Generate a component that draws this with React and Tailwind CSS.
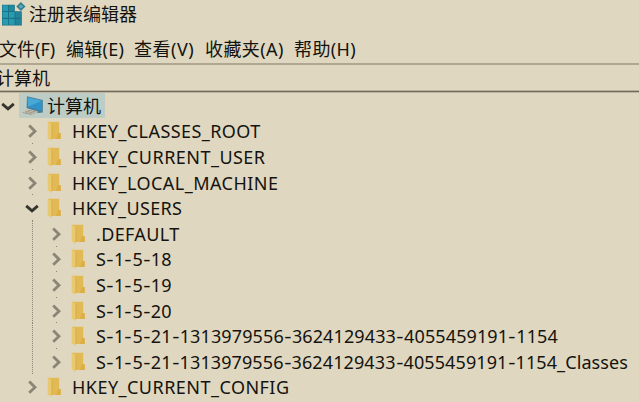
const menus = [
  { label: '文件(F)', cls: '-ml-px w-[67px]' },
  { label: '编辑(E)', cls: 'w-[68px] tracking-[0.25px]' },
  { label: '查看(V)', cls: 'w-[71px] tracking-[0.5px]' },
  { label: '收藏夹(A)', cls: 'w-[89px] tracking-[0.4px]' },
  { label: '帮助(H)', cls: 'w-[80px] tracking-[0.4px]' },
];

const rows = [
  { label: 'HKEY_CLASSES_ROOT', depth: 1, cls: 'tracking-[0.43px]' },
  { label: 'HKEY_CURRENT_USER', depth: 1, cls: 'tracking-[0.47px]' },
  { label: 'HKEY_LOCAL_MACHINE', depth: 1, cls: 'tracking-[0.46px]' },
  { label: 'HKEY_USERS', depth: 1, open: true, cls: 'tracking-[0.35px]' },
  { label: '.DEFAULT', depth: 2, cls: 'tracking-[0.35px]' },
  { label: 'S-1-5-18', depth: 2, cls: 'tracking-[0.1px]' },
  { label: 'S-1-5-19', depth: 2, cls: 'tracking-[0.1px]' },
  { label: 'S-1-5-20', depth: 2, cls: 'tracking-[0.1px]' },
  { label: 'S-1-5-21-1313979556-3624129433-4055459191-1154', depth: 2, cls: 'tracking-[0.12px]' },
  { label: 'S-1-5-21-1313979556-3624129433-4055459191-1154_Classes', depth: 2, cls: 'tracking-[0.1px]' },
  { label: 'HKEY_CURRENT_CONFIG', depth: 1, cls: 'tracking-[0.47px]' },
];

function RegistryIcon() {
  return (
    <svg className="h-[26px] w-[26px] shrink-0" viewBox="0 0 26 26">
      <path d="M2 3.7h12.8v6.6h7V24.6H2z" fill="#1b7285" />
      <path d="M2.6 4.3h5.4v5.6H2.6zM2.6 11h5.4v5.8H2.6zM9 11h5.6v5.8H9zM2.6 17.9h5.4v5.8H2.6zM9 17.9h5.6v5.8H9z" fill="#279bb1" />
      <path d="M9 4.3h5v5.6H9z" fill="#1f899e" />
      <path d="M15.6 11h5.4v5.8h-5.4zM15.6 17.9h5.4v5.8h-5.4z" fill="#218499" />
      <path d="M20.9 1l4.6 4.5-4.6 4.5-4.6-4.5z" fill="#367f90" />
      <path d="M20.9 3.4l2.2 2.1-2.2 2.1-2.2-2.1z" fill="#5eadba" />
    </svg>
  );
}

function ComputerIcon() {
  return (
    <svg className="h-[22px] w-6 shrink-0" viewBox="0 0 24 22">
      <path d="M8 1.2L23.8 5v12.4L19.4 18 7.6 13z" fill="#4b7d95" />
      <path d="M8.8 2.3L22.8 5.7v10.4L8.9 11.8z" fill="#2d93c8" />
      <path d="M8.8 2.3L22.8 5.7 8.9 11.8z" fill="#4aa8d4" />
      <path d="M1 17l8.6-3.3 9.6 2.8-6 4.2z" fill="#c9c7b8" />
      <path d="M3.5 17.4l9.8 2.2M6 16.2l10 2.2M8.6 15l9.5 2.2M6 18.6l7-4M9.5 19.4l7-4" stroke="#8f8c80" strokeWidth=".6" fill="none" />
    </svg>
  );
}

function FolderIcon() {
  return (
    <svg className="h-5 w-4 shrink-0" viewBox="0 0 16 20">
      <path d="M1 .8h11.2v11.4l1.5 1V18H4L1 16.5z" fill="#e2ba55" />
      <path d="M11 12h2.7v6H9z" fill="#dcae45" />
      <path d="M.7.8l4 2.2v17L.7 17.4z" fill="#e9c970" />
      <path d="M4.9 3.2v14.8" stroke="#d4a54b" strokeWidth=".7" />
    </svg>
  );
}

function Chevron({ open }) {
  return (
    <svg className="h-4 w-4 shrink-0" viewBox="0 0 16 16" fill="none" strokeWidth="2.8">
      {open ? <path d="M2.2 5.9L8 10.9l5.8-5" stroke="#35332e" /> : <path d="M5.2 2.4L11 8.2l-5.8 5.5" stroke="#8b8577" />}
    </svg>
  );
}

function Label({ text, cls }) {
  return (
    <span className={`ml-[9px] whitespace-pre leading-6 ${cls}`}>
      {text.split(/(-)/).map((part, i) =>
        part === '-' ? (
          <span key={i} className="inline-block w-[8px] scale-x-125 text-center tracking-normal">-</span>
        ) : (
          part
        )
      )}
    </span>
  );
}

function Row({ row, index }) {
  return (
    <div className="flex h-[25.6px] items-center">
      {row.depth === 2 && (
        <div className="flex h-full w-6 justify-end">
          <div className="mr-[-9px] w-px self-stretch bg-[repeating-linear-gradient(to_bottom,#8b8678_0_1px,transparent_1px_2px)]" />
        </div>
      )}
      <div className="relative ml-6 flex h-full w-4 items-center">
        <Chevron open={row.open} />
        {index < 9 && <div className="absolute bottom-0 left-2 h-px w-px bg-[#8b8678]" />}
      </div>
      <div className="ml-[7px]"><FolderIcon /></div>
      <Label text={row.label} cls={row.cls} />
    </div>
  );
}

export default function App() {
  return (
    <main className="flex h-[402px] w-[639px] flex-col overflow-hidden bg-[#dfd7bf] font-['Noto_Sans','Noto_Sans_CJK_SC',sans-serif] text-[18px] text-[#14130f]">
      <header className="flex h-7 items-center">
        <RegistryIcon />
        <h1 className="ml-[3px] leading-7">注册表编辑器</h1>
      </header>
      <nav className="flex h-[35px] items-center pt-1.5">
        {menus.map((m) => (
          <span key={m.label} className={`shrink-0 whitespace-nowrap leading-7 ${m.cls}`}>{m.label}</span>
        ))}
      </nav>
      <div className="flex h-[28px] shrink-0 items-center border-t-2 border-b border-t-[#b0a792] border-b-[#b9b19c]">
        <span className="-ml-1 leading-6">计算机</span>
      </div>
      <div className="h-0.5 shrink-0 border-t border-b border-t-[#6e6958] border-b-[#bdb5a0]" />
      <section className="flex flex-col">
        <div className="flex h-[25.7px] items-center">
          <Chevron open />
          <div className="ml-[3px] flex h-[25px] w-[86px] items-center bg-[#bdcdc6]">
            <ComputerIcon />
            <span className="ml-[4px] leading-6">计算机</span>
          </div>
        </div>
        {rows.map((row, i) => <Row key={row.label} row={row} index={i} />)}
      </section>
    </main>
  );
}
